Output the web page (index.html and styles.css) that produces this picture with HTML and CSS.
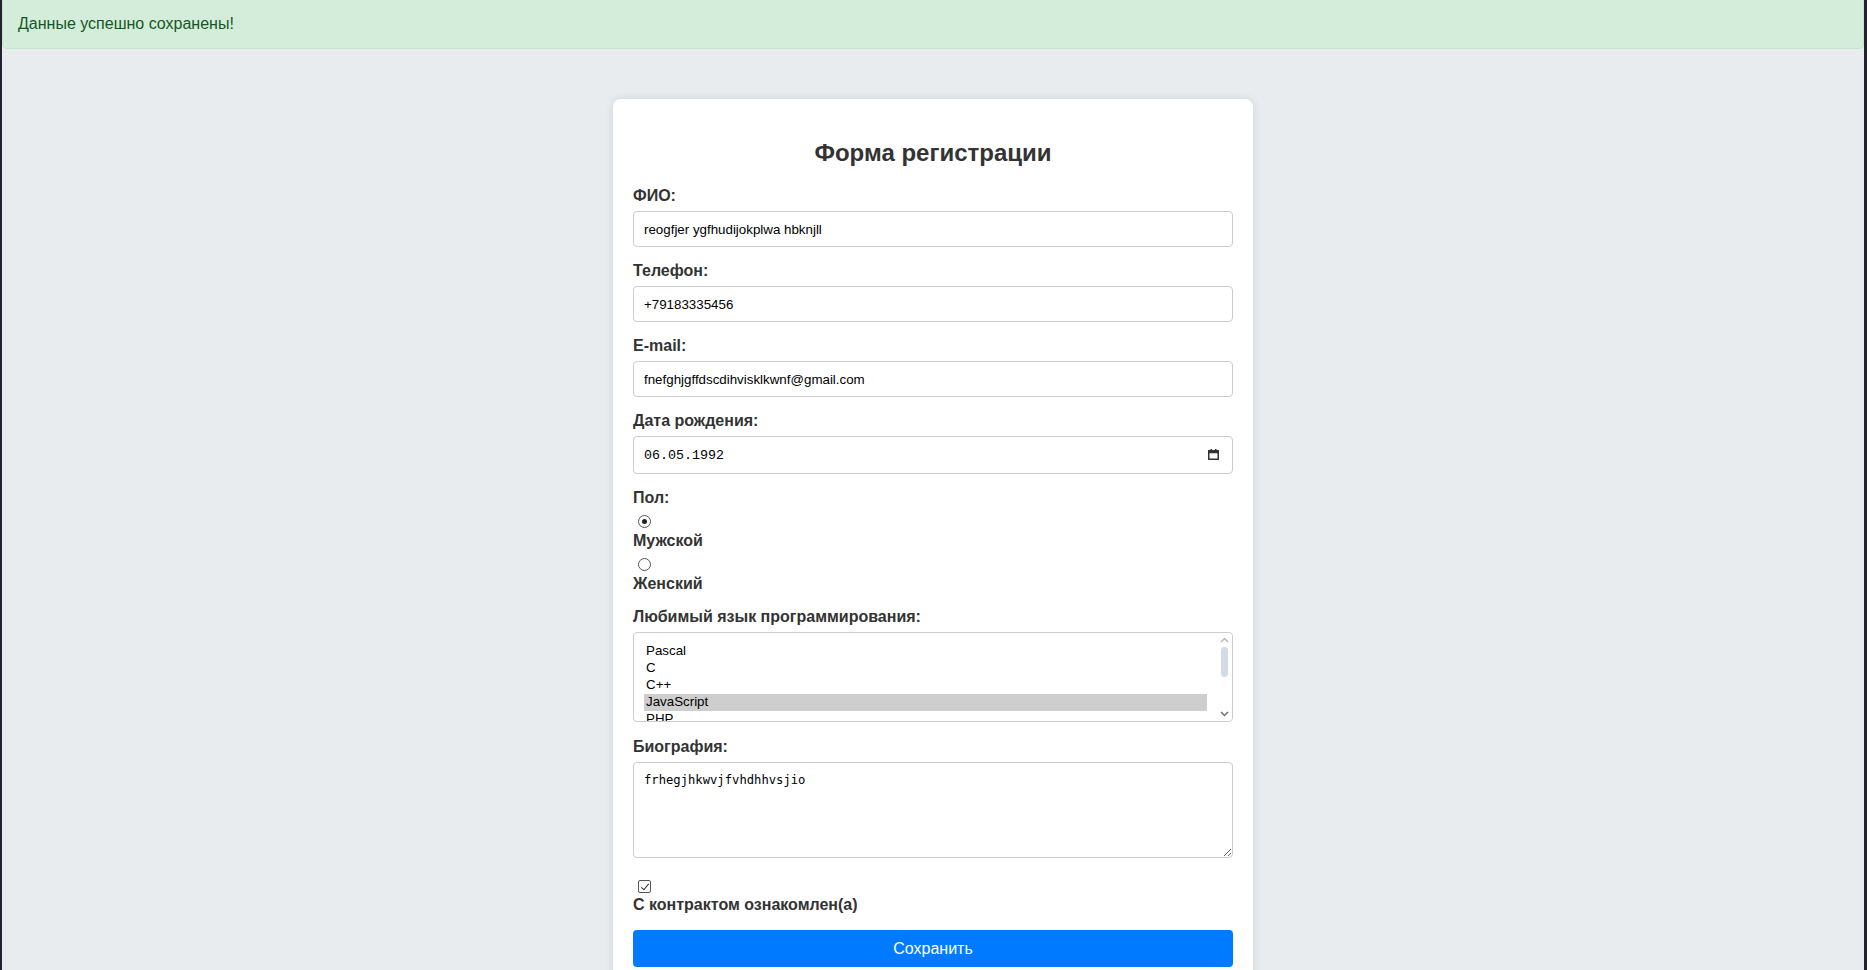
FILE: index.html
```html
<!DOCTYPE html>
<html lang="ru">
<head>
<meta charset="utf-8">
<title>Форма регистрации</title>
<link rel="stylesheet" href="styles.css">
</head>
<body>
<div class="alert">Данные успешно сохранены!</div>
<div class="card">
  <h2 class="title">Форма регистрации</h2>
  <form class="form">
    <label class="label">ФИО:</label>
    <input class="field" type="text" value="reogfjer ygfhudijokplwa hbknjll">

    <label class="label">Телефон:</label>
    <input class="field" type="text" value="+79183335456">

    <label class="label">E-mail:</label>
    <input class="field" type="text" value="fnefghjgffdscdihvisklkwnf@gmail.com">

    <label class="label">Дата рождения:</label>
    <div class="date-wrap">
      <input class="field date" type="text" value="06.05.1992">
      <svg class="cal-icon" width="11" height="11" viewBox="0 0 11 11" aria-hidden="true">
        <rect x="0.75" y="1.75" width="9.5" height="8.5" fill="none" stroke="#333" stroke-width="1.5"/>
        <rect x="0.75" y="1.75" width="9.5" height="2.5" fill="#333"/>
        <rect x="2.5" y="0" width="1.5" height="2" fill="#333"/>
        <rect x="7" y="0" width="1.5" height="2" fill="#333"/>
      </svg>
    </div>

    <label class="label">Пол:</label>
    <div class="choices">
      <input class="radio" type="radio" name="sex" checked>
      <label class="label choice-label">Мужской</label>
      <input class="radio" type="radio" name="sex">
      <label class="label choice-label">Женский</label>
    </div>

    <label class="label">Любимый язык программирования:</label>
    <div class="list-wrap">
      <select class="field list" multiple>
        <option>Pascal</option>
        <option>C</option>
        <option>C++</option>
        <option selected>JavaScript</option>
        <option>PHP</option>
        <option>Python</option>
        <option>Java</option>
        <option>Haskel</option>
        <option>Clojure</option>
        <option>Prolog</option>
        <option>Scala</option>
        <option>Go</option>
      </select>
      <div class="scrollbar" aria-hidden="true">
        <svg class="sb-arrow" width="9" height="6" viewBox="0 0 9 6">
          <path d="M1 5 L4.5 1.5 L8 5" fill="none" stroke="#b8b8b8" stroke-width="1.5"/>
        </svg>
        <div class="sb-track"><div class="sb-thumb"></div></div>
        <svg class="sb-arrow" width="9" height="6" viewBox="0 0 9 6">
          <path d="M1 1 L4.5 4.5 L8 1" fill="none" stroke="#707070" stroke-width="1.5"/>
        </svg>
      </div>
    </div>

    <label class="label">Биография:</label>
    <textarea class="field bio">frhegjhkwvjfvhdhhvsjio</textarea>

    <input class="check" type="checkbox" checked>
    <label class="label check-label">С контрактом ознакомлен(а)</label>

    <button class="submit" type="button">Сохранить</button>
  </form>
</div>
</body>
</html>
```

FILE: styles.css
```css
html {
  background: #25222f;
  overflow: hidden;
}

body {
  margin: 0 3px 0 2px;
  min-height: 970px;
  background: #e9ecef;
  font-family: "Liberation Sans", Arial, sans-serif;
  color: #333;
}

.alert {
  padding: 15px;
  line-height: 18px;
  font-size: 16px;
  color: #155724;
  background: #d4edda;
  border: 1px solid #c3e6cb;
  border-top: 0;
  border-radius: 0 0 5px 5px;
}

.card {
  width: 600px;
  margin: 50px auto 0;
  padding: 20px;
  background: #fff;
  border-radius: 8px;
  box-shadow: 0 0 10px rgba(0, 0, 0, 0.1);
}

.title {
  margin: 20px 0 20px;
  font-size: 24px;
  line-height: 28px;
  text-align: center;
  color: #333;
}

.form {
  display: flex;
  flex-direction: column;
  align-items: flex-start;
}

.label {
  display: block;
  font-size: 16px;
  line-height: 18px;
  font-weight: bold;
  color: #333;
  margin-bottom: 6px;
}

.field {
  width: 100%;
  box-sizing: border-box;
  margin: 0 0 15px;
  padding: 10px;
  border: 1px solid #ccc;
  border-radius: 4px;
  font-family: "Liberation Sans", Arial, sans-serif;
  font-size: 13.33px;
  line-height: 15px;
  color: #000;
  background: #fff;
  outline: none;
}

input.field {
  height: 36px;
}

.date-wrap {
  position: relative;
  width: 100%;
}

input.date {
  height: 38px;
  font-family: "Liberation Mono", "DejaVu Sans Mono", monospace;
  font-size: 13.33px;
}

.cal-icon {
  position: absolute;
  right: 14px;
  top: 13px;
}

.choices {
  display: flex;
  flex-direction: column;
  align-items: flex-start;
  margin-bottom: 15px;
}

.radio {
  -webkit-appearance: none;
  appearance: none;
  position: relative;
  width: 13px;
  height: 13px;
  margin: 2px 0 4px 5px;
  border: 1px solid #555;
  border-radius: 50%;
  background: #fff;
  box-sizing: border-box;
}

.radio:checked::after {
  content: "";
  position: absolute;
  left: 3px;
  top: 3px;
  width: 5px;
  height: 5px;
  border-radius: 50%;
  background: #222;
}

.choice-label {
  margin-bottom: 6px;
}

.choice-label:last-child {
  margin-bottom: 0;
}

.list-wrap {
  position: relative;
  width: 100%;
  margin-bottom: 16px;
}

.list {
  display: block;
  height: 90px;
  padding: 10px 25px 10px 10px;
  margin-bottom: 0;
  overflow-y: hidden;
}

.list option {
  padding: 0 2px 1px;
  line-height: 16px;
  color: #000;
}

.list option:checked {
  background: #cecece;
  color: #000;
}

.scrollbar {
  position: absolute;
  top: 1px;
  right: 1px;
  bottom: 1px;
  width: 15px;
  display: flex;
  flex-direction: column;
  align-items: center;
  padding: 4px 0 4px;
  box-sizing: border-box;
  border-radius: 0 4px 4px 0;
  background: #fff;
}

.sb-arrow {
  flex: none;
}

.sb-track {
  flex: 1;
  width: 100%;
  display: flex;
  justify-content: center;
  padding-top: 4px;
}

.sb-thumb {
  width: 7px;
  height: 30px;
  border-radius: 4px;
  background: #d3dbe4;
}

.bio {
  height: 96px;
  font-family: "DejaVu Sans Mono", "Liberation Mono", monospace;
  font-size: 12.2px;
  line-height: 15px;
  resize: vertical;
  margin-bottom: 22px;
}

.check {
  -webkit-appearance: none;
  appearance: none;
  position: relative;
  width: 13px;
  height: 13px;
  margin: 0 0 3px 5px;
  border: 1px solid #555;
  border-radius: 2px;
  background: #fff;
  box-sizing: border-box;
}

.check:checked::after {
  content: "";
  position: absolute;
  left: 3.5px;
  top: 0.5px;
  width: 3px;
  height: 7px;
  border: solid #333;
  border-width: 0 1.3px 1.3px 0;
  transform: rotate(40deg);
}

.check-label {
  margin-bottom: 16px;
}

.submit {
  width: 100%;
  height: 37px;
  border: 0;
  border-radius: 4px;
  background: #007bff;
  color: #fff;
  font-family: "Liberation Sans", Arial, sans-serif;
  font-size: 16px;
}
```
